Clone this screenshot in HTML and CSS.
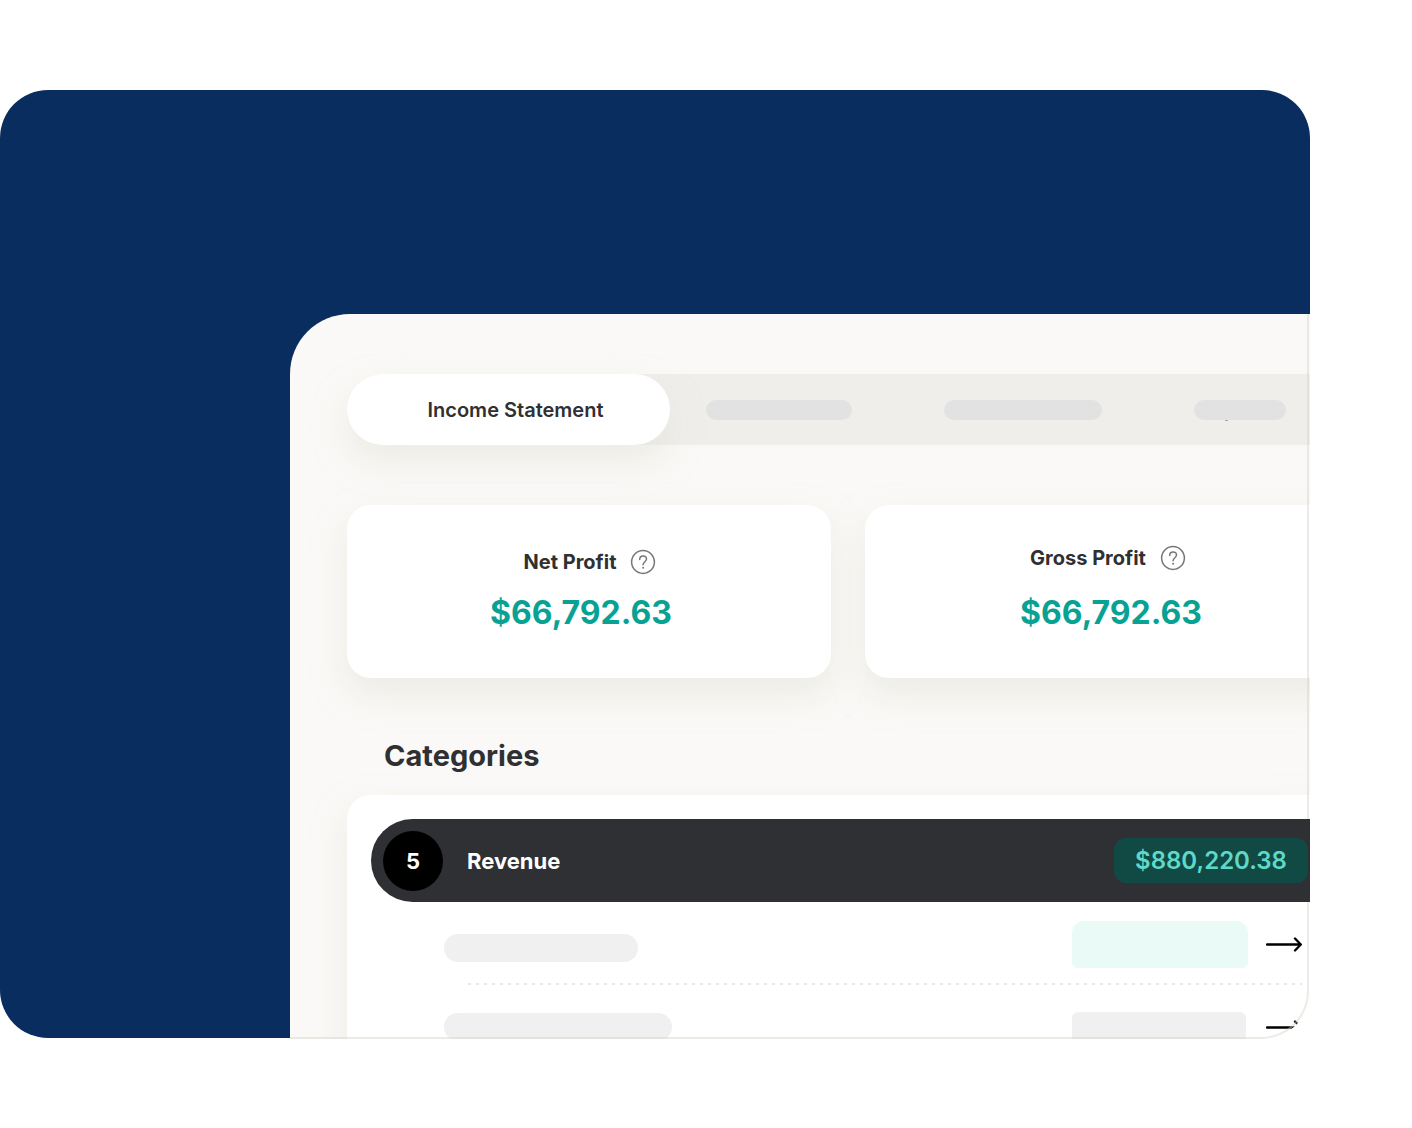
FILE: index.html
```html
<!DOCTYPE html>
<html lang="en">
<head>
  <meta charset="UTF-8">
  <meta name="viewport" content="width=device-width, initial-scale=1.0">
  <title>Income Statement</title>
  <link rel="stylesheet" href="styles.css">
</head>
<body>
  <div class="stage">
    <main class="panel">
      <nav class="tabs">
        <button type="button" class="tab active">Income Statement</button>
        <span class="bar tab-bar"></span>
        <span class="bar tab-bar wide"></span>
        <span class="bar tab-bar short"></span>
      </nav>

      <section class="cards">
        <div class="card">
          <h2 class="card-title">
            Net Profit
            <svg class="help" viewBox="0 0 26 26" fill="none" stroke="#77777a" stroke-width="1.5" stroke-linecap="round">
              <circle cx="13" cy="13" r="11.4"/>
              <path d="M9.7 10.4C9.7 8.300 11.200 7 13.100 7s3.400 1.300 3.400 3.100c0 2.600-3.400 2.700-3.400 5.600"/>
              <circle cx="13.1" cy="18.7" r="1" fill="#77777a" stroke="none"/>
            </svg>
          </h2>
          <p class="value">$66,792.63</p>
        </div>
        <div class="card raised">
          <h2 class="card-title">
            Gross Profit
            <svg class="help" viewBox="0 0 26 26" fill="none" stroke="#77777a" stroke-width="1.5" stroke-linecap="round">
              <circle cx="13" cy="13" r="11.4"/>
              <path d="M9.7 10.4C9.7 8.300 11.200 7 13.100 7s3.400 1.300 3.400 3.100c0 2.600-3.400 2.700-3.400 5.600"/>
              <circle cx="13.1" cy="18.7" r="1" fill="#77777a" stroke="none"/>
            </svg>
          </h2>
          <p class="value">$66,792.63</p>
        </div>
      </section>

      <h1 class="heading">Categories</h1>

      <section class="categories">
        <div class="category">
          <span class="count">5</span>
          <span class="name">Revenue</span>
          <span class="total">$880,220.38</span>
        </div>
        <div class="row">
          <span class="bar row-bar"></span>
          <span class="amount mint"></span>
          <svg class="arrow" viewBox="0 0 36 16" fill="none" stroke="#000" stroke-width="2.4" stroke-linecap="round" stroke-linejoin="round">
            <path d="M1 8.500h33.500M29 2.500l5.800 6-5.800 6"/>
          </svg>
        </div>
        <div class="row last">
          <span class="bar row-bar wide"></span>
          <span class="amount"></span>
          <svg class="arrow" viewBox="0 0 36 16" fill="none" stroke="#000" stroke-width="2.4" stroke-linecap="round" stroke-linejoin="round">
            <path d="M1 8.500h33.500M29 2.500l5.800 6-5.800 6"/>
          </svg>
        </div>
      </section>
    </main>
  </div>
</body>
</html>
```

FILE: styles.css
```css
* {
  box-sizing: border-box;
  margin: 0;
  padding: 0;
}

body {
  background: #fff;
  color: #2f3033;
  font-family: Inter, "Liberation Sans", sans-serif;
}

.stage {
  display: flex;
  height: calc(100vh - 180px);
  margin: 90px 102px 90px 0;
  background: #092d5f;
  border-radius: 48px 48px 60px 48px;
}

.panel {
  position: relative;
  flex: 1;
  min-width: 0;
  margin: 224px 0 -1px 290px;
  padding: 60px 0 0 57px;
  background: #faf9f7;
  border-radius: 60px 0 48px 0;
  overflow: hidden;
}

/* hairline frame, sits under the dark category row */
.panel::after {
  content: "";
  position: absolute;
  inset: 0 1px 0 0;
  border-right: 2px solid rgba(214, 210, 198, 0.45);
  border-bottom: 2px solid rgba(214, 210, 198, 0.45);
  border-radius: 0 0 48px 0;
  pointer-events: none;
}

.bar {
  flex: none;
  background: #f0f0f0;
  border-radius: 14px;
}

/* tabs */
.tabs {
  display: flex;
  align-items: center;
  gap: 92px;
  height: 71px;
  background: #efeeeb;
  border-radius: 36px 0 0 36px;
}

.tab {
  flex: none;
  width: 323px;
  height: 71px;
  padding-left: 14px;
  margin-right: -56px;
  background: #fff;
  border: none;
  border-radius: 36px;
  box-shadow: 0 16px 32px rgba(224, 224, 212, 0.5);
  color: inherit;
  font-family: inherit;
  font-size: 20px;
  font-weight: 600;
  cursor: pointer;
}

.tab-bar {
  position: relative;
  width: 146px;
  height: 20px;
  background: #e2e2e2;
}

.tab-bar.wide {
  width: 158px;
}

.tab-bar.short {
  width: 92px;
}

.tab-bar.short::after {
  content: "";
  position: absolute;
  top: 20px;
  left: 31px;
  width: 3px;
  height: 1px;
  background: #a5a5a3;
}

/* profit cards */
.cards {
  display: flex;
  gap: 34px;
  margin-top: 60px;
}

.card {
  flex: none;
  width: 484px;
  height: 173px;
  padding-top: 44px;
  background: #fff;
  border-radius: 24px;
  box-shadow: 0 16px 32px rgba(224, 224, 212, 0.5);
  text-align: center;
}

.card-title {
  display: flex;
  justify-content: center;
  align-items: center;
  gap: 14px;
  height: 26px;
  padding-left: 2px;
  font-size: 20px;
  font-weight: 700;
}

.help {
  width: 26px;
  height: 26px;
}

.value {
  margin-top: 16px;
  padding-right: 16px;
  color: #08a294;
  font-size: 32px;
  font-weight: 700;
  line-height: 44px;
}

.card.raised {
  padding-top: 40px;
}

.raised .value {
  margin-top: 20px;
  padding: 0 0 0 8px;
}

/* categories */
.heading {
  margin: 58px 0 19px 37px;
  font-size: 29px;
  font-weight: 700;
  line-height: 40px;
}

.categories {
  height: 400px;
  padding: 24px 0 0 24px;
  background: #fff;
  border-radius: 24px 0 0 24px;
  box-shadow: 0 16px 32px rgba(224, 224, 212, 0.5);
}

.category {
  position: relative;
  z-index: 1;
  display: flex;
  align-items: center;
  height: 83px;
  padding: 0 2px 0 12px;
  background: #2f3033;
  border-radius: 42px 0 0 42px;
  color: #fff;
  font-size: 22px;
  font-weight: 700;
}

.count {
  width: 60px;
  margin-right: 24px;
  background: #000;
  border-radius: 50%;
  line-height: 60px;
  text-align: center;
}

.total {
  width: 194px;
  margin-left: auto;
  background: #114a45;
  border-radius: 12px;
  color: #5fd9c7;
  font-size: 24px;
  font-weight: 600;
  line-height: 45px;
  text-align: center;
}

.row {
  display: flex;
  align-items: center;
  height: 83px;
  margin-right: 8px;
  padding-left: 73px;
  background: repeating-linear-gradient(90deg, #e8e8e8 0 3px, transparent 3px 8px) 97px 100% / 100% 2px no-repeat;
}

.row-bar {
  width: 194px;
  height: 28px;
  margin-top: 8px;
}

.row-bar.wide {
  width: 228px;
}

.amount {
  width: 176px;
  height: 47px;
  margin: 2px 18px 0 auto;
  background: #f0f0f0;
  border-radius: 6px;
}

.amount.mint {
  background: #e9faf7;
  border-radius: 12px 12px 6px 6px;
}

/* the last row is cut off by the panel edge */
.last .row-bar {
  margin-top: 0;
}

.last .amount {
  width: 174px;
  margin: 18px 20px 0 auto;
}

.arrow {
  width: 36px;
  height: 16px;
}
```
